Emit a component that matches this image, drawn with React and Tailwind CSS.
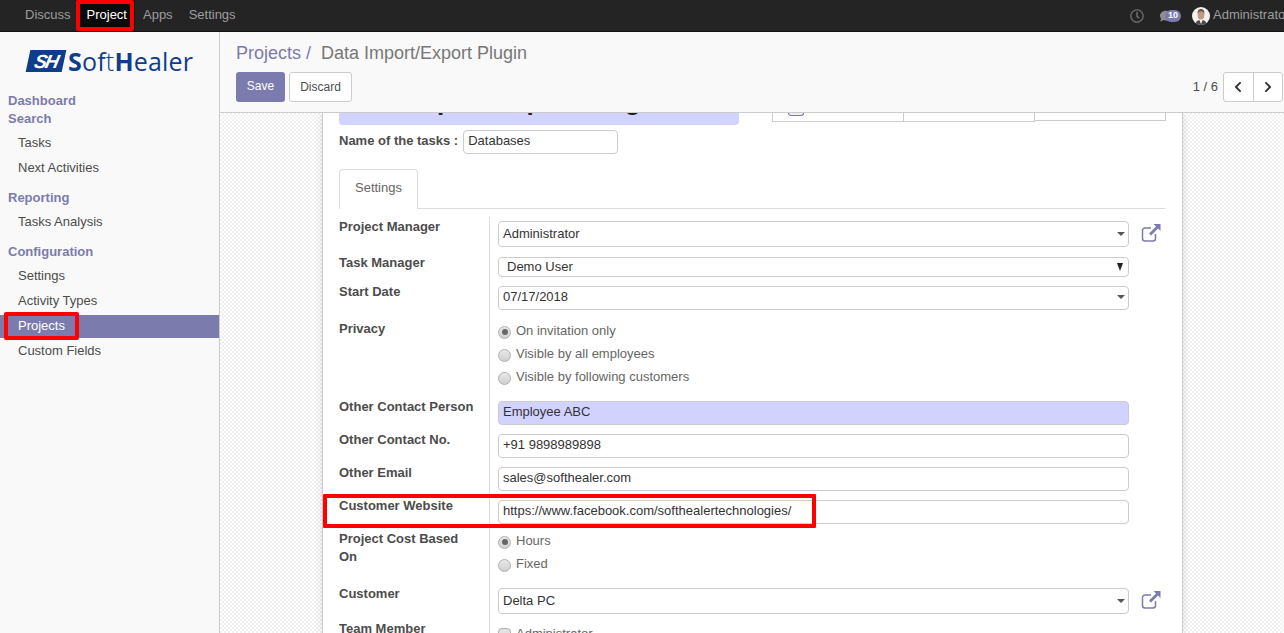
import { FaChevronLeft, FaChevronRight, FaRegClock, FaComment } from 'react-icons/fa';

function ExternalLink() {
  return (
    <svg className="ml-3 mt-0.5 h-5 w-5 shrink-0" viewBox="0 0 20 20" fill="none">
      <path d="M14.5 11v4.5a2.5 2.5 0 0 1-2.5 2.5H4a2.5 2.5 0 0 1-2.5-2.5V7.500A2.500 2.500 0 0 1 4 5h6" stroke="#7c7bad" strokeWidth="1.500" />
      <path d="M12.500 1H19.500V8L17 5.500L10 12.500L8 10.500L15 3.500Z" fill="#7c7bad" />
    </svg>
  );
}

function Caret({ dark }) {
  return (
    <svg className={dark ? 'h-2 w-1.5' : 'h-1 w-2'} viewBox="0 0 10 6" preserveAspectRatio="none">
      <path d="M0 0H10L5 6Z" fill={dark ? '#222222' : '#555555'} />
    </svg>
  );
}

function Radio({ label, checked }) {
  return (
    <div className="flex h-[23px] items-center gap-[5px]">
      <span className="mt-[3px] flex h-[13px] w-[13px] items-center justify-center rounded-full border border-[#b0b0b0] bg-linear-to-b from-[#e8e8e8] to-[#d0d0d0]">
        {checked && <span className="h-[6px] w-[6px] rounded-full bg-[#666666]" />}
      </span>
      <span className="text-[#666666]">{label}</span>
    </div>
  );
}

function Row({ label, className, children }) {
  return (
    <div className={`flex ${className}`}>
      <div className="w-[150px] shrink-0 pr-3 pt-px font-bold leading-[18px] text-[#4c4c4c]">{label}</div>
      <div className="min-w-0 flex-1 border-l border-[#dddddd] pl-2">{children}</div>
    </div>
  );
}

function Field({ value, className = '' }) {
  return (
    <div className="flex pt-1">
      <div className={`flex h-6 w-[631px] items-center rounded border border-[#cccccc] px-1 pb-0.5 text-[#333333] ${className}`}>{value}</div>
    </div>
  );
}

function SelectField({ value, link }) {
  return (
    <div className="flex pt-1">
      <div className={`flex w-[631px] items-center justify-between rounded border border-[#cccccc] pl-1 pr-[3px] text-[#333333] ${link ? 'h-[26px]' : 'h-6 pb-0.5'}`}>
        <span>{value}</span>
        <Caret />
      </div>
      {link && <ExternalLink />}
    </div>
  );
}

function SideItem({ label, active }) {
  return (
    <div className={`mb-0.5 flex h-[23px] items-center pb-0.5 pl-[18px] ${active ? 'bg-[#7c7bad] text-white' : 'text-[#4c4c4c]'}`}>{label}</div>
  );
}

function SideHead({ label, className = '' }) {
  return <div className={`flex h-[18px] items-center pl-2 font-bold text-[#7c7bad] ${className}`}>{label}</div>;
}

export default function App() {
  return (
    <div className="relative flex h-[633px] w-[1284px] flex-col overflow-hidden bg-white font-['Liberation_Sans',Arial,sans-serif] text-[13px] text-[#4c4c4c]">
      {/* top bar */}
      <div className="flex h-8 shrink-0 items-center border-b border-[#111111] bg-[#242424] pl-[17px] text-[#9d9d9d]">
        <div className="flex h-full items-center px-2 pb-px">Discuss</div>
        <div className="flex h-full items-center bg-[#0b0b0b] px-2 pb-px text-white">Project</div>
        <div className="flex h-full items-center px-2 pb-px">Apps</div>
        <div className="flex h-full items-center px-2 pb-px">Settings</div>
        <div className="ml-auto flex h-full w-[154px] shrink-0 items-center overflow-hidden">
          <FaRegClock className="h-[14px] w-[14px] shrink-0 text-[#6f6f6f]" />
          <div className="relative ml-4 h-3 w-[21px] shrink-0">
            <FaComment className="absolute left-0 top-0 h-3 w-3 text-[#8f8f8f]" />
            <span className="absolute right-0 top-0 flex h-3 w-4 items-center justify-center rounded-full bg-[#7c7bad] text-[9px] font-bold text-white">10</span>
          </div>
          <svg className="ml-[11px] h-[18px] w-[18px] shrink-0 rounded-full" viewBox="0 0 18 18">
            <rect width="18" height="18" fill="#f4f1ee" />
            <path d="M3 18c.5-4 3-5 6-5s5.500 1 6 5Z" fill="#4a4a52" />
            <path d="M7.500 13h3L9 17Z" fill="#ffffff" />
            <ellipse cx="9" cy="8" rx="3.300" ry="4.600" fill="#c09a85" />
            <path d="M5.600 7c-.3-4 1.500-5 3.400-5s3.700 1 3.400 5c-.7-2-2-2.500-3.400-2.500S6.300 5 5.600 7Z" fill="#6b5a50" />
          </svg>
          <span className="ml-[3px] shrink-0 whitespace-nowrap pb-px">Administrator</span>
        </div>
      </div>

      <div className="flex min-h-0 flex-1">
        {/* sidebar */}
        <div className="w-[220px] shrink-0 border-r border-[#cccccc] bg-[#f9f9f9]">
          <div className="flex h-[60px] items-start pl-[28px] pt-[18px]">
            <div className="flex h-[22px] w-[36px] -skew-x-12 items-center justify-center bg-[#0f3d8c]">
              <span className="text-[19px] font-bold italic leading-none tracking-[-2px] text-white">SH</span>
            </div>
            <div className="ml-1 flex h-[22px] items-center whitespace-nowrap font-['Open_Sans',sans-serif] text-[25px] leading-none tracking-[0.2px] text-[#0f3d8c]">
              <span className="font-bold">S</span>
              <span>of</span>
              <span className="font-light">t</span>
              <span className="font-bold">H</span>
              <span>ealer</span>
            </div>
          </div>
          <SideHead label="Dashboard" />
          <SideHead label="Search" />
          <div className="mt-1">
            <SideItem label="Tasks" />
            <SideItem label="Next Activities" />
          </div>
          <SideHead label="Reporting" className="mt-[9px]" />
          <div className="mt-1">
            <SideItem label="Tasks Analysis" />
          </div>
          <SideHead label="Configuration" className="mt-[9px]" />
          <div className="mt-1">
            <SideItem label="Settings" />
            <SideItem label="Activity Types" />
            <SideItem label="Projects" active />
            <SideItem label="Custom Fields" />
          </div>
        </div>

        <div className="flex min-w-0 flex-1 flex-col">
          {/* control panel */}
          <div className="h-[81px] shrink-0 border-b border-[#cccccc] bg-[#f9f9f9] pl-4 pr-px">
            <div className="flex h-10 items-center pt-0.5 text-lg">
              <span className="text-[#7c7bad]">Projects /</span>
              <span className="ml-[10px] text-[#777777]">Data Import/Export Plugin</span>
            </div>
            <div className="flex h-[30px] items-center">
              <button className="h-[30px] w-[49px] rounded-[3px] bg-[#7c7bad] pb-0.5 text-xs text-white">Save</button>
              <button className="ml-1 h-[30px] w-[63px] rounded-[3px] border border-[#cccccc] bg-white pb-px text-xs text-[#4c4c4c]">Discard</button>
              <span className="ml-auto mr-[5px] text-[#4c4c4c]">1 / 6</span>
              <div className="flex h-[30px] w-[60px] rounded-[3px] border border-[#cccccc] bg-white text-[#333333]">
                <div className="flex flex-1 items-center justify-center border-r border-[#cccccc]"><FaChevronLeft className="h-3 w-3" /></div>
                <div className="flex flex-1 items-center justify-center"><FaChevronRight className="h-3 w-3" /></div>
              </div>
            </div>
          </div>

          {/* form on dotted backdrop */}
          <div className="min-h-0 flex-1 overflow-hidden bg-[repeating-conic-gradient(#f1f1f1_0_25%,#ffffff_0_50%)] bg-[length:4px_4px] pl-[102px]">
            <div className="h-full w-[861px] border-x border-[#cccccc] bg-white px-4 shadow-[0_0_8px_rgba(0,0,0,0.12)]">
              <div className="flex h-[12px] items-start">
                <div className="h-3 w-[400px] shrink-0 overflow-hidden rounded-b bg-[#d2d2ff] pl-1">
                  <div className="-mt-[27px] whitespace-nowrap text-[26px] font-bold leading-[30px] text-[#222222]">Data Import/Export Plugin</div>
                </div>
                <div className="ml-[33px] flex w-[394px] shrink-0 items-start">
                  <div className="h-[9px] w-[132px] border-x border-b border-[#cccccc] pl-[15px]">
                    <div className="h-[3px] w-4 rounded-b-sm border-x border-b border-[#7c7bad] bg-[#eeeeee]" />
                  </div>
                  <div className="h-[9px] w-[131px] border-r border-b border-[#cccccc]" />
                  <div className="h-2 w-[131px] border-r border-b border-[#cccccc]" />
                </div>
              </div>
              <div className="mt-[5px] flex h-6 items-center">
                <span className="pb-0.5 font-bold text-[#4c4c4c]">Name of the tasks :</span>
                <div className="ml-[5px] flex h-6 w-[155px] items-center rounded border border-[#cccccc] px-1 pb-0.5 text-[#333333]">Databases</div>
              </div>
              <div className="mt-[15px] h-10 w-[826px] border-b border-[#dddddd]">
                <div className="flex h-10 w-[79px] items-center justify-center rounded-t border-x border-t border-[#dddddd] bg-white pb-[3px] text-[#666666]">Settings</div>
              </div>
              <div className="mt-[8px]">
                <Row label="Project Manager" className="h-9">
                  <SelectField value="Administrator" link />
                </Row>
                <Row label="Task Manager" className="h-[29px]">
                  <div className="flex pt-1">
                    <div className="flex h-5 w-[631px] items-center justify-between rounded border border-[#cccccc] pl-2 pr-[5px] text-[#333333]">
                      <span>Demo User</span>
                      <Caret dark />
                    </div>
                  </div>
                </Row>
                <Row label="Start Date" className="h-[37px]">
                  <SelectField value="07/17/2018" />
                </Row>
                <Row label="Privacy" className="h-[78px]">
                  <Radio label="On invitation only" checked />
                  <Radio label="Visible by all employees" />
                  <Radio label="Visible by following customers" />
                </Row>
                <Row label="Other Contact Person" className="h-[33px]">
                  <Field value="Employee ABC" className="bg-[#d2d2ff]" />
                </Row>
                <Row label="Other Contact No." className="h-[33px]">
                  <Field value="+91 9898989898" />
                </Row>
                <Row label="Other Email" className="h-[33px]">
                  <Field value="sales@softhealer.com" />
                </Row>
                <Row label="Customer Website" className="h-[33px]">
                  <Field value="https://www.facebook.com/softhealertechnologies/" />
                </Row>
                <Row label="Project Cost Based On" className="h-[55px]">
                  <Radio label="Hours" checked />
                  <Radio label="Fixed" />
                </Row>
                <Row label="Customer" className="h-[35px]">
                  <SelectField value="Delta PC" link />
                </Row>
                <Row label="Team Member" className="h-[40px]">
                  <div className="flex h-[23px] items-center gap-[5px] pt-[7px]">
                    <span className="h-[13px] w-[13px] rounded-sm border border-[#b0b0b0] bg-[#e2e2e2]" />
                    <span className="text-[#666666]">Administrator</span>
                  </div>
                </Row>
              </div>
            </div>
          </div>
        </div>
      </div>

      {/* red annotation boxes */}
      <div className="absolute left-[76px] top-0 h-[31px] w-[58px] rounded-[2px] border-4 border-[#ff0000]" />
      <div className="absolute left-1 top-[312px] h-[28px] w-[75px] rounded-[2px] border-4 border-[#ff0000]" />
      <div className="absolute left-[323px] top-[494px] h-[34px] w-[493px] rounded-[1px] border-4 border-[#ff0000]" />
    </div>
  );
}
